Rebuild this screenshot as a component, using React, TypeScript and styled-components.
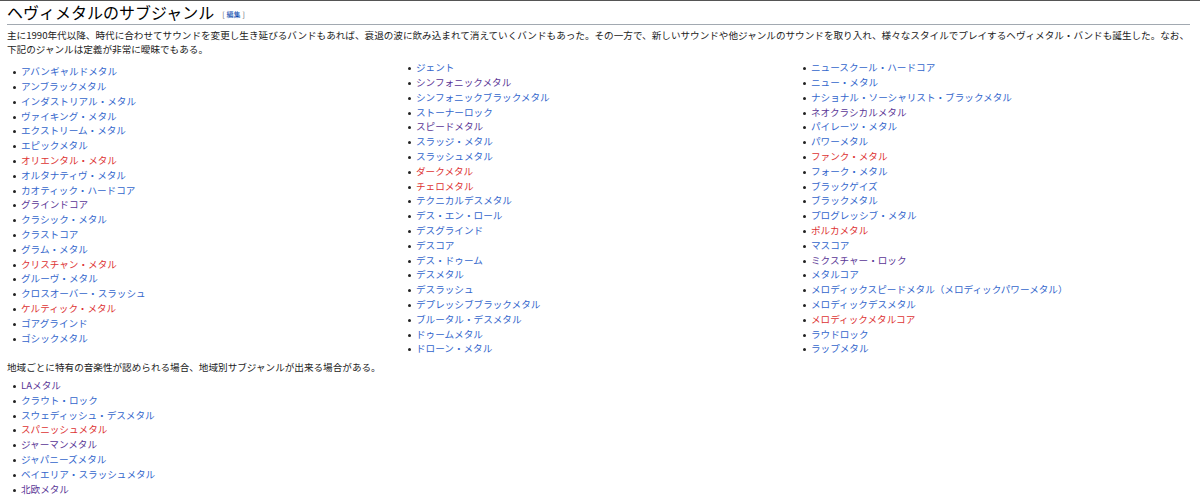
import React from "react"
import styled, { createGlobalStyle } from "styled-components"

type Kind = "new" | "visited" | "red"
type Item = [string, Kind?]

const columns: Item[][] = [
  [
    ["アバンギャルドメタル"], ["アンブラックメタル"], ["インダストリアル・メタル"], ["ヴァイキング・メタル"],
    ["エクストリーム・メタル"], ["エピックメタル"], ["オリエンタル・メタル", "red"], ["オルタナティヴ・メタル"],
    ["カオティック・ハードコア"], ["グラインドコア", "visited"], ["クラシック・メタル"], ["クラストコア"],
    ["グラム・メタル"], ["クリスチャン・メタル", "red"], ["グルーヴ・メタル"], ["クロスオーバー・スラッシュ"],
    ["ケルティック・メタル", "red"], ["ゴアグラインド"], ["ゴシックメタル"],
  ],
  [
    ["ジェント"], ["シンフォニックメタル", "visited"], ["シンフォニックブラックメタル"], ["ストーナーロック"],
    ["スピードメタル", "visited"], ["スラッジ・メタル"], ["スラッシュメタル"], ["ダークメタル", "red"],
    ["チェロメタル", "red"], ["テクニカルデスメタル"], ["デス・エン・ロール"], ["デスグラインド"], ["デスコア"],
    ["デス・ドゥーム"], ["デスメタル"], ["デスラッシュ"], ["デプレッシブブラックメタル"], ["ブルータル・デスメタル"],
    ["ドゥームメタル"], ["ドローン・メタル"],
  ],
  [
    ["ニュースクール・ハードコア"], ["ニュー・メタル"], ["ナショナル・ソーシャリスト・ブラックメタル"],
    ["ネオクラシカルメタル", "visited"], ["パイレーツ・メタル"], ["パワーメタル"], ["ファンク・メタル", "red"],
    ["フォーク・メタル"], ["ブラックゲイズ"], ["ブラックメタル"], ["プログレッシブ・メタル"], ["ポルカメタル", "red"],
    ["マスコア"], ["ミクスチャー・ロック", "visited"], ["メタルコア"],
    ["メロディックスピードメタル（メロディックパワーメタル）"], ["メロディックデスメタル"],
    ["メロディックメタルコア", "red"], ["ラウドロック"], ["ラップメタル"],
  ],
]

const regional: Item[] = [
  ["LAメタル", "visited"], ["クラウト・ロック"], ["スウェディッシュ・デスメタル"], ["スパニッシュメタル", "red"],
  ["ジャーマンメタル", "visited"], ["ジャパニーズメタル"], ["ベイエリア・スラッシュメタル"], ["北欧メタル", "visited"],
]

const Global = createGlobalStyle`
  body {
    margin: 0;
    background: #fff;
    color: #222;
    font-family: "Noto Sans CJK JP", "Liberation Sans", sans-serif;
    border-top: 1px solid #555;
  }
`

const Page = styled.div`
  padding: 3px 10px 0 7px;
`

const Heading = styled.h2`
  margin: 0 0 3px;
  padding-bottom: 1px;
  font-size: 16px;
  font-weight: normal;
  line-height: 17px;
  border-bottom: 1px solid #a2a9b1;
  color: #000;
`

const Edit = styled.span`
  font-size: 7px;
  color: #54595d;
  margin-left: 8px;
  vertical-align: middle;
  a { color: #0645ad; margin: 0 2px; text-decoration: none; }
`

const Para = styled.p`
  margin: 0 0 4px;
  font-size: 9.6px;
  line-height: 14px;
`

const Grid = styled.div`
  display: grid;
  grid-template-columns: repeat(3, 1fr);
  column-gap: 2px;
  margin-bottom: 4px;
`

const List = styled.ul<{ $drop?: boolean }>`
  margin: ${(p) => (p.$drop ? "4px" : "0")} 0 0;
  padding-left: 14px;
  font-size: 9.6px;
  line-height: 14.8px;
  list-style: none;
`

const Li = styled.li`
  position: relative;
  white-space: nowrap;
  &::before {
    content: "";
    position: absolute;
    left: -8px;
    top: 7px;
    width: 3px;
    height: 3px;
    border-radius: 50%;
    background: #222;
  }
`

const colors: Record<Kind, string> = { new: "#3366cc", visited: "#5a3696", red: "#d33" }

const Link = styled.a<{ $kind: Kind }>`
  color: ${(p) => colors[p.$kind]};
  text-decoration: none;
`

const Items = ({ items, drop }: { items: Item[]; drop?: boolean }) => (
  <List $drop={drop}>
    {items.map(([t, k]) => (
      <Li key={t}>
        <Link $kind={k ?? "new"} href="#">{t}</Link>
      </Li>
    ))}
  </List>
)

export default function App() {
  return (
    <Page>
      <Global />
      <Heading>
        ヘヴィメタルのサブジャンル
        <Edit>[<a href="#">編集</a>]</Edit>
      </Heading>
      <Para>
        主に1990年代以降、時代に合わせてサウンドを変更し生き延びるバンドもあれば、衰退の波に飲み込まれて消えていくバンドもあった。その一方で、新しいサウンドや他ジャンルのサウンドを取り入れ、様々なスタイルでプレイするヘヴィメタル・バンドも誕生した。なお、下記のジャンルは定義が非常に曖昧でもある。
      </Para>
      <Grid>
        {columns.map((c, i) => (
          <Items key={i} items={c} drop={i === 0} />
        ))}
      </Grid>
      <Para>地域ごとに特有の音楽性が認められる場合、地域別サブジャンルが出来る場合がある。</Para>
      <Items items={regional} drop />
    </Page>
  )
}
